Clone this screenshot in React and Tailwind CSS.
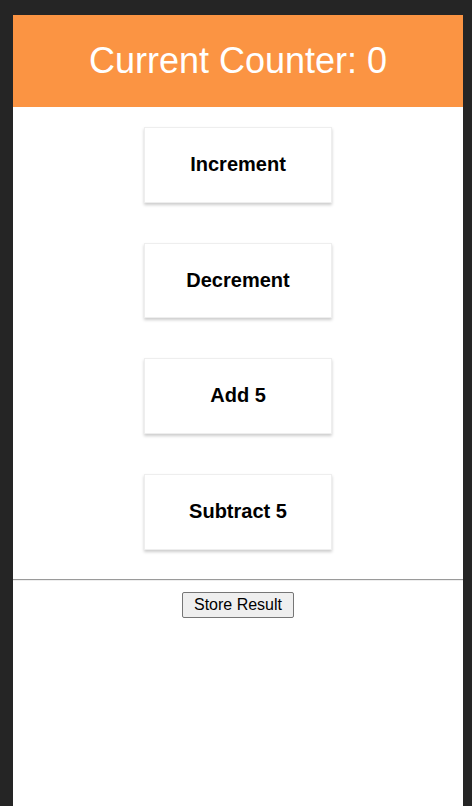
// Counter panel: orange header, four action cards, a divider and a plain store button.

const actions = ['Increment', 'Decrement', 'Add 5', 'Subtract 5']

function ActionCard({ label }) {
  return (
    <button
      type="button"
      className="w-[188px] h-[75.7px] mx-auto pb-[2px] bg-white border border-[#eeeeee] shadow-[0_2px_3px_#cccccc] text-[20px] font-bold text-black"
    >
      {label}
    </button>
  )
}

export default function App() {
  return (
    <div
      className="min-h-screen bg-[#252525] pt-[15px] pl-[13px] flex"
      style={{ fontFamily: '"Liberation Sans", Arial, sans-serif' }}
    >
      <div className="w-[450px] bg-white flex flex-col">
        {/* Header */}
        <div className="h-[92px] bg-[#fb9443] flex items-center justify-center">
          <h1 className="text-[36px] text-white leading-none">Current Counter: 0</h1>
        </div>

        {/* Actions */}
        <div className="flex flex-col gap-[40px] pt-5 pb-5">
          {actions.map((a) => (
            <ActionCard key={a} label={a} />
          ))}
        </div>

        <hr className="mt-[9.3px] h-0 border-t border-t-[#9a9a9a] border-b border-b-[#eeeeee]" />

        <div className="flex justify-center pt-[11px]">
          <button
            type="button"
            className="h-[26px] px-[11px] text-[16px] text-black bg-[#efefef] border border-[#767676] rounded-[2px] leading-none"
          >
            Store Result
          </button>
        </div>
      </div>
    </div>
  )
}
